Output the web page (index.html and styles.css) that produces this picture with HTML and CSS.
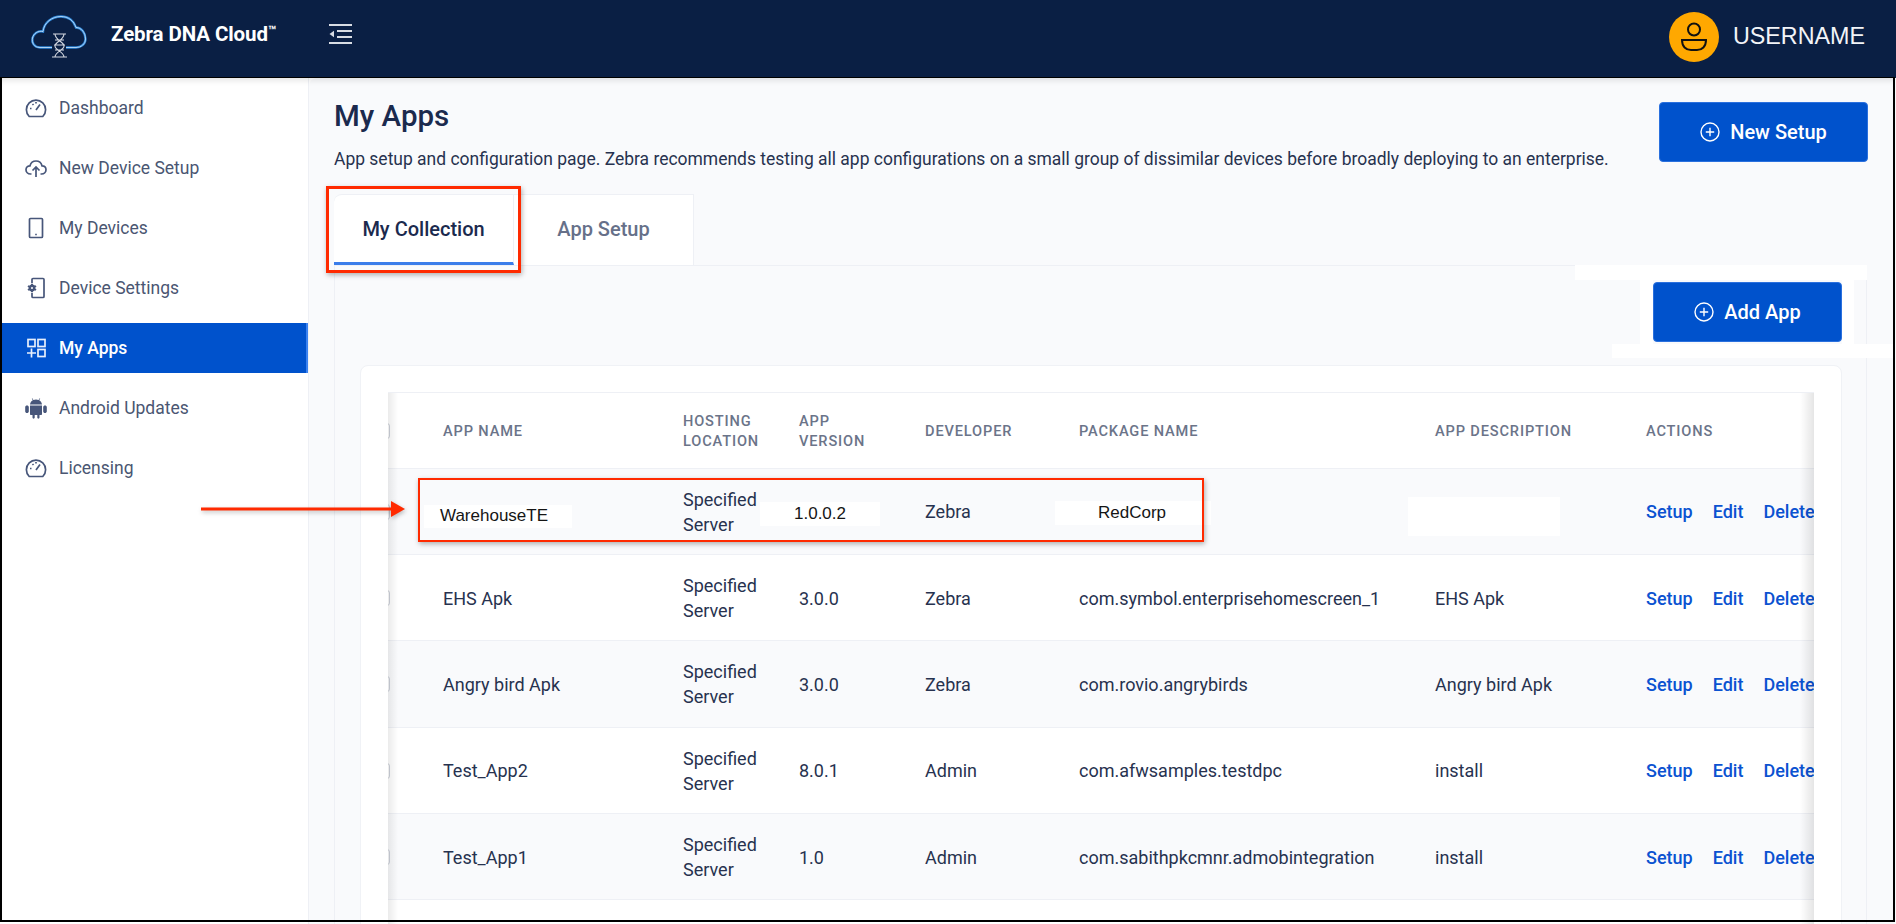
FILE: index.html
```html
<!DOCTYPE html>
<html lang="en">
<head>
<meta charset="utf-8">
<title>My Apps</title>
<link rel="stylesheet" href="styles.css">
</head>
<body>
<div class="app">
  <header class="topbar">
    <svg class="logo" viewBox="20 5 80 60" width="80" height="60" fill="none">
      <path class="logo-glow" d="M52 43.500H40C34 43.500 31.500 38.500 32.500 34C33.500 29.500 38 26.500 43 27.500C44 18.500 52 12.500 61 12.500C68.500 12.500 74 17 76 23.500C81.500 23.500 85.500 29 85.500 35C85.500 40 81 43.500 76 43.500H66"/>
      <path class="logo-line" d="M52 43.500H40C34 43.500 31.500 38.500 32.500 34C33.500 29.500 38 26.500 43 27.500C44 18.500 52 12.500 61 12.500C68.500 12.500 74 17 76 23.500C81.500 23.500 85.500 29 85.500 35C85.500 40 81 43.500 76 43.500H66"/>
      <path class="logo-dna" d="M53 30H66M52 53H67M55 30C55 36 64 38 64 42C64 46 55 48 55 53M64 30C64 36 55 38 55 42C55 46 64 48 64 53M55 36H64M54 41H65M55 46H64"/>
    </svg>
    <div class="brand">Zebra DNA Cloud<sup class="tm">™</sup></div>
    <svg class="menu-toggle" viewBox="0 0 24 20" width="24" height="20" fill="none">
      <path d="M0 1H23M8 7H23M8 13H23M0 19H23" stroke="#d8dce4" stroke-width="2"/>
      <path d="M0.500 10L5 6.800V13.200Z" fill="#d8dce4"/>
    </svg>
    <div class="user">
      <svg class="avatar" viewBox="0 0 50 50" width="50" height="50" fill="none">
        <circle cx="25" cy="25" r="25" fill="#ffa800"/>
        <circle cx="25" cy="17.500" r="6" stroke="#111" stroke-width="2"/>
        <path d="M13 28H37C37 34.500 33 38 28 38H22C17 38 13 34.500 13 28Z" stroke="#111" stroke-width="2"/>
      </svg>
      <span class="username">USERNAME</span>
    </div>
  </header>

  <div class="workspace">
    <nav class="sidebar">
      <a class="nav-item">
        <svg class="nav-icon" viewBox="0 0 22 22" fill="none"><path d="M4.200 19.500A9.600 9.600 0 1 1 17.800 19.500Z"/><path d="M11 13L15 7.500M5 11.500H6.500M7.500 7L8.500 8M11 5V6.500"/></svg>
        <span>Dashboard</span>
      </a>
      <a class="nav-item">
        <svg class="nav-icon" viewBox="0 0 22 22" fill="none"><path d="M6.500 17H5.500C2.800 17 1 15 1 12.800C1 10.500 2.800 8.800 5 8.800C5.800 5.800 8 4 11 4C14 4 16.300 6 17 8.800C19.300 8.800 21 10.500 21 12.800C21 15 19.300 17 16.500 17H15.500"/><path d="M11 20V10.500M7.500 13.500L11 10L14.500 13.500"/></svg>
        <span>New Device Setup</span>
      </a>
      <a class="nav-item">
        <svg class="nav-icon" viewBox="0 0 22 22" fill="none"><rect x="4.500" y="1.500" width="13" height="19" rx="1"/><path d="M10.200 17.500H11.800"/></svg>
        <span>My Devices</span>
      </a>
      <a class="nav-item">
        <svg class="nav-icon" viewBox="0 0 22 22" fill="none"><path d="M7 6V2.500C7 2 7.500 1.500 8 1.500H18C18.500 1.500 19 2 19 2.500V19.500C19 20 18.500 20.500 18 20.500H8C7.500 20.500 7 20 7 19.500V16"/><circle cx="7" cy="11" r="2.200" stroke-width="2.400"/><path d="M7 6.800V8M7 14V15.200M3 9L4.200 9.700M9.800 12.300L11 13M3 13L4.200 12.300M9.800 9.700L11 9" stroke-width="2"/></svg>
        <span>Device Settings</span>
      </a>
      <a class="nav-item is-active">
        <svg class="nav-icon" viewBox="0 0 22 22" fill="none"><rect x="3" y="2.500" width="7" height="7"/><rect x="13" y="2.500" width="7" height="7"/><rect x="13" y="12.500" width="7" height="7"/><path d="M2 16H11M6.500 11.500V20.500"/></svg>
        <span>My Apps</span>
      </a>
      <a class="nav-item">
        <svg class="nav-icon nav-icon-solid" viewBox="0 0 22 22"><path d="M5 8.500H17V17C17 17.600 16.600 18 16 18H14.500V20.500C14.500 22 12.300 22 12.300 20.500V18H9.700V20.500C9.700 22 7.500 22 7.500 20.500V18H6C5.400 18 5 17.600 5 17ZM2 8.500C3 8.500 3.800 9.200 3.800 10V14.500C3.800 15.300 3 16 2 16C1 16 .200 15.300 .200 14.500V10C.200 9.200 1 8.500 2 8.500ZM20 8.500C21 8.500 21.800 9.200 21.800 10V14.500C21.800 15.300 21 16 20 16C19 16 18.200 15.300 18.200 14.500V10C18.200 9.200 19 8.500 20 8.500ZM5 7.500C5.200 5.500 6.200 4 7.800 3.200L6.800 1.500L7.300 1.200L8.400 3C10.200 2.300 11.800 2.300 13.600 3L14.700 1.200L15.200 1.500L14.200 3.200C15.800 4 16.800 5.500 17 7.500Z"/></svg>
        <span>Android Updates</span>
      </a>
      <a class="nav-item">
        <svg class="nav-icon" viewBox="0 0 22 22" fill="none"><path d="M4.200 19.500A9.600 9.600 0 1 1 17.800 19.500Z"/><path d="M11 13L15 7.500M5 11.500H6.500M7.500 7L8.500 8M11 5V6.500"/></svg>
        <span>Licensing</span>
      </a>
    </nav>

    <main class="main">
      <div class="page-head">
        <div class="page-intro">
          <h1 class="page-title">My Apps</h1>
          <p class="page-desc">App setup and configuration page. Zebra recommends testing all app configurations on a small group of dissimilar devices before broadly deploying to an enterprise.</p>
        </div>
        <button class="btn btn-setup">
          <svg class="btn-icon" viewBox="0 0 20 20" fill="none"><circle cx="10" cy="10" r="9"/><path d="M10 5.800V14.200M5.800 10H14.200"/></svg>
          New Setup
        </button>
      </div>

      <div class="tabs">
        <div class="tab is-current">My Collection</div>
        <div class="tab">App Setup</div>
      </div>

      <section class="tab-panel">
        <div class="panel-actions">
          <button class="btn btn-add">
            <svg class="btn-icon" viewBox="0 0 20 20" fill="none"><circle cx="10" cy="10" r="9"/><path d="M10 5.800V14.200M5.800 10H14.200"/></svg>
            Add App
          </button>
        </div>
        <div class="card">
          <div class="table-wrap">
            <table class="apps">
              <colgroup>
                <col class="c-check"><col class="c-name"><col class="c-host"><col class="c-ver"><col class="c-dev"><col class="c-pkg"><col class="c-desc"><col class="c-act">
              </colgroup>
              <thead>
                <tr>
                  <th><span class="check"></span></th>
                  <th>APP NAME</th>
                  <th>HOSTING<br>LOCATION</th>
                  <th>APP<br>VERSION</th>
                  <th>DEVELOPER</th>
                  <th>PACKAGE NAME</th>
                  <th>APP DESCRIPTION</th>
                  <th>ACTIONS</th>
                </tr>
              </thead>
              <tbody>
                <tr class="shaded">
                  <td><span class="check"></span></td>
                  <td></td>
                  <td>Specified<br>Server</td>
                  <td></td>
                  <td>Zebra</td>
                  <td></td>
                  <td></td>
                  <td class="actions"><a>Setup</a><a>Edit</a><a>Delete</a></td>
                </tr>
                <tr>
                  <td><span class="check"></span></td>
                  <td>EHS Apk</td>
                  <td>Specified<br>Server</td>
                  <td>3.0.0</td>
                  <td>Zebra</td>
                  <td>com.symbol.enterprisehomescreen_1</td>
                  <td>EHS Apk</td>
                  <td class="actions"><a>Setup</a><a>Edit</a><a>Delete</a></td>
                </tr>
                <tr class="shaded">
                  <td><span class="check"></span></td>
                  <td>Angry bird Apk</td>
                  <td>Specified<br>Server</td>
                  <td>3.0.0</td>
                  <td>Zebra</td>
                  <td>com.rovio.angrybirds</td>
                  <td>Angry bird Apk</td>
                  <td class="actions"><a>Setup</a><a>Edit</a><a>Delete</a></td>
                </tr>
                <tr>
                  <td><span class="check"></span></td>
                  <td>Test_App2</td>
                  <td>Specified<br>Server</td>
                  <td>8.0.1</td>
                  <td>Admin</td>
                  <td>com.afwsamples.testdpc</td>
                  <td>install</td>
                  <td class="actions"><a>Setup</a><a>Edit</a><a>Delete</a></td>
                </tr>
                <tr class="shaded">
                  <td><span class="check"></span></td>
                  <td>Test_App1</td>
                  <td>Specified<br>Server</td>
                  <td>1.0</td>
                  <td>Admin</td>
                  <td>com.sabithpkcmnr.admobintegration</td>
                  <td>install</td>
                  <td class="actions"><a>Setup</a><a>Edit</a><a>Delete</a></td>
                </tr>
                <tr>
                  <td></td>
                  <td></td>
                  <td>Specified<br>Server</td>
                  <td></td>
                  <td></td>
                  <td></td>
                  <td></td>
                  <td></td>
                </tr>
              </tbody>
            </table>
            <div class="edge edge-left"></div>
            <div class="edge edge-right"></div>
          </div>
        </div>
      </section>
    </main>
  </div>

  <!-- Edits painted over the screenshot -->
  <div class="patch patch-strip-top"></div>
  <div class="patch patch-add-left"></div>
  <div class="patch patch-add-right"></div>
  <div class="patch patch-strip-bottom"></div>
  <div class="patch patch-name">WarehouseTE</div>
  <div class="patch patch-version">1.0.0.2</div>
  <div class="patch patch-package">RedCorp</div>
  <div class="patch patch-desc"></div>

  <div class="callout callout-tab"></div>
  <div class="callout callout-row"></div>
  <svg class="callout-arrow" viewBox="0 0 206 20" width="206" height="20">
    <path d="M0 8.500H190V2L204 10L190 18V11.500H0Z"/>
  </svg>

  <div class="frame"></div>
</div>
</body>
</html>
```

FILE: styles.css
```css
* { box-sizing: border-box; }

html, body {
  margin: 0;
  height: 924px;
  overflow: hidden;
  background: #fff;
}

body {
  font-family: Roboto, "Liberation Sans", sans-serif;
  font-size: 18px;
  color: #1f2c4d;
}

.app {
  position: relative;
  width: 1896px;
  height: 924px;
  overflow: hidden;
  display: flex;
  flex-direction: column;
}

/* Top bar */
.topbar {
  flex: none;
  height: 78px;
  background: #0a1f44;
  display: flex;
  align-items: center;
  padding-left: 20px;
  color: #fff;
}

.logo { flex: none; margin: 0 11px 0 0; }
.logo-glow { stroke: #2f8fe8; stroke-width: 2.400; opacity: .9; }
.logo-line { stroke: #cfe6fb; stroke-width: .8; }
.logo-dna { stroke: #d5d9e2; stroke-width: 1.100; }

.brand {
  font-size: 20.500px;
  font-weight: 700;
  letter-spacing: -.1px;
  width: 218px;
  margin-top: -10px;
  white-space: nowrap;
}
.tm { font-size: 13px; line-height: 0; vertical-align: 6px; }

.menu-toggle { flex: none; margin-top: -10px; }

.user {
  margin-left: auto;
  display: flex;
  align-items: center;
  margin-top: -5px;
  padding-right: 31px;
}
.avatar { flex: none; }
.username {
  font-family: "Liberation Sans", Arial, sans-serif;
  font-size: 23.300px;
  margin-left: 14px;
  color: #f2f4f8;
}

/* Body */
.workspace {
  flex: 1;
  min-height: 0;
  display: flex;
}

.sidebar {
  flex: none;
  width: 309px;
  padding-top: 5px;
  background: #fff;
  border-right: 1px solid #eef0f5;
}

.nav-item {
  display: flex;
  align-items: center;
  height: 50px;
  margin-bottom: 10px;
  padding-left: 25px;
  gap: 12px;
  color: #4a5672;
  font-size: 17.500px;
}
.nav-item.is-active {
  background: #0052cc;
  border-right: 2px solid #3b82f0;
  color: #fff;
  font-weight: 500;
}

.nav-icon {
  flex: none;
  width: 22px;
  height: 22px;
  stroke: #47567a;
  stroke-width: 1.700;
}
.is-active .nav-icon { stroke: #e7effb; }
.nav-icon-solid { fill: #47567a; stroke: none; }

.main {
  flex: 1;
  min-width: 0;
  background: #f9fafc;
  padding: 24px 29px 0 25px;
  border-top-left-radius: 8px;
}

.page-head {
  display: flex;
  justify-content: space-between;
  align-items: flex-start;
  height: 92px;
}
.page-intro { margin-top: -4px; }
.page-title {
  margin: 0;
  font-size: 29.500px;
  font-weight: 500;
  line-height: 36px;
  color: #1b2a4e;
}
.page-desc {
  margin: 13px 0 0;
  font-size: 17.480px;
  line-height: 24px;
  white-space: nowrap;
  color: #27324f;
}

.btn {
  display: flex;
  align-items: center;
  justify-content: center;
  gap: 10px;
  height: 60px;
  padding: 0 0 0 0;
  font: 500 20px Roboto, sans-serif;
  color: #fff;
  background: #0052cc;
  border: 1px solid #2a70de;
  border-radius: 4px;
}
.btn-setup { width: 209px; margin-right: -1px; }
.btn-add { width: 189px; }
.btn-icon {
  flex: none;
  width: 20px;
  height: 20px;
  stroke: #fff;
  stroke-width: 1.400;
}

.tabs {
  display: flex;
  height: 71px;
}
.tab {
  width: 180px;
  display: flex;
  align-items: center;
  justify-content: center;
  background: #fff;
  border: 1px solid #eef0f5;
  border-left: 0;
  border-bottom: 0;
  padding-bottom: 2px;
  font-size: 20px;
  font-weight: 500;
  color: #667089;
}
.tab.is-current {
  width: 180px;
  color: #1b2a4e;
  border-top-left-radius: 8px;
  border-bottom: 3px solid #3b7dea;
  padding-bottom: 0;
}

.tab-panel {
  height: 700px;
  border: 1px solid #eef0f5;
  padding: 16px 24px 0 25px;
}

.panel-actions {
  display: flex;
  justify-content: flex-end;
  height: 83px;
}

.card {
  background: #fff;
  border: 1px solid #f0f2f6;
  border-radius: 8px;
  padding: 26px 27px 0 27px;
  height: 600px;
}

.table-wrap {
  position: relative;
  overflow: hidden;
  height: 600px;
  border-top: 1px solid #eef0f5;
}

.apps {
  border-collapse: collapse;
  table-layout: fixed;
  width: 1426px;
}
.c-check { width: 55px; }
.c-name { width: 240px; }
.c-host { width: 116px; }
.c-ver { width: 126px; }
.c-dev { width: 154px; }
.c-pkg { width: 356px; }
.c-desc { width: 211px; }
.c-act { width: 168px; }

.apps th {
  height: 75px;
  padding: 2px 0 0;
  text-align: left;
  font-size: 14.600px;
  font-weight: 500;
  line-height: 20px;
  letter-spacing: .85px;
  color: #6b7489;
}
.apps td {
  height: 86.400px;
  padding: 1px 0 0;
  font-size: 18px;
  line-height: 25px;
  color: #27324f;
  white-space: nowrap;
}
.apps tr { border-bottom: 1px solid #eef0f5; }
.apps tr.shaded { background: #f9fafc; }

.check {
  display: block;
  width: 16px;
  height: 16px;
  margin-left: -14px;
  border: 1px solid #cdd1da;
  border-radius: 3px;
}

.actions a {
  color: #0b52d1;
  font-weight: 500;
  margin-right: 20px;
}

.edge {
  position: absolute;
  top: 0;
  bottom: 0;
  pointer-events: none;
}
.edge-left {
  left: 0;
  width: 10px;
  background: linear-gradient(to right, rgba(0,0,0,.08), rgba(0,0,0,0));
}
.edge-right {
  right: 0;
  width: 14px;
  background: linear-gradient(to left, rgba(0,0,0,.1), rgba(0,0,0,0));
}

/* Edits painted over the screenshot */
.patch {
  position: absolute;
  background: #fff;
  font-family: "Liberation Sans", Arial, sans-serif;
  font-size: 17px;
  line-height: 22px;
  color: #151515;
}
.patch-strip-top { left: 1575px; top: 265px; width: 292px; height: 15px; }
.patch-add-left { left: 1640px; top: 280px; width: 13px; height: 64px; }
.patch-add-right { left: 1842px; top: 280px; width: 12px; height: 64px; }
.patch-strip-bottom { left: 1612px; top: 344px; width: 281px; height: 14px; }
.patch-name { left: 424px; top: 505px; width: 148px; height: 23px; padding-left: 16px; }
.patch-version { left: 760px; top: 502px; width: 120px; height: 24px; padding: 1px 0 0 34px; }
.patch-package { left: 1055px; top: 501px; width: 156px; height: 24px; padding: 1px 0 0 43px; }
.patch-desc { left: 1408px; top: 497px; width: 152px; height: 39px; }

/* Red annotations */
.callout {
  position: absolute;
  border: 3px solid #ff2a00;
  box-shadow: 1px 2px 5px rgba(0,0,0,.3);
}
.callout-tab { left: 326px; top: 186px; width: 195px; height: 87px; }
.callout-row { left: 418px; top: 478px; width: 786px; height: 64px; border-width: 2px; }
.callout-arrow {
  position: absolute;
  left: 201px;
  top: 499px;
  fill: #ff2a00;
  filter: drop-shadow(1px 2px 2px rgba(0,0,0,.25));
}

.frame {
  position: absolute;
  left: 0;
  top: 77px;
  width: 1895px;
  height: 845px;
  border: 2px solid #000;
  border-top-width: 1px;
  box-shadow: inset 0 6px 6px -4px rgba(0,0,0,.12);
  pointer-events: none;
}
```
